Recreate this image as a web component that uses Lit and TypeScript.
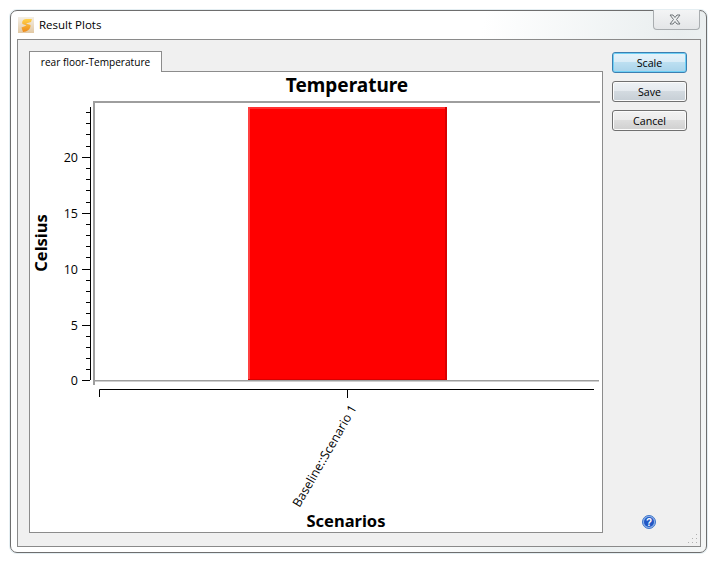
import { LitElement, html, css, svg } from "lit";
import { customElement } from "lit/decorators.js";

const Y0 = 380.4;
const UNIT = 11.18;

@customElement("app-root")
export class AppRoot extends LitElement {
  static styles = css`
    :host { display: block; width: 717px; height: 563px; background: #fff; font-family: "Open Sans", "Noto Sans", sans-serif; color: #000; overflow: hidden; }
    .page { box-sizing: border-box; width: 717px; height: 563px; padding: 10px; }
    .window { box-sizing: border-box; position: relative; width: 697px; height: 543px; border: 1px solid #6e6e6e; border-radius: 7px; box-shadow: 0 0 0 1px #e4eef2; background: linear-gradient(100deg, #ffffff 0%, #ffffff 60%, #e9eeef 85%, #f4f6f6 100%); display: flex; flex-direction: column; padding: 0 5px 5px 6px; }
    .title { height: 28px; flex: none; display: flex; align-items: center; gap: 5px; font-size: 11.5px; padding: 0 0 2px 1px; box-sizing: border-box; }
    .title svg { display: block; margin-top: 2px; }
    .close { position: absolute; right: 6px; top: -1px; width: 47px; height: 20px; box-sizing: border-box; border: 1px solid #a9adb0; border-top: none; border-radius: 0 0 4px 4px; background: linear-gradient(#f3f4f5, #e4e6e8); display: flex; align-items: center; justify-content: center; padding-right: 4px; }
    .client { flex: 1; box-sizing: border-box; border: 1px solid #8a8a8a; background: #f0f0f0; display: flex; padding: 11px 12px 13px 11px; gap: 9px; position: relative; }
    .tabs { width: 574px; display: flex; flex-direction: column; }
    .tab { align-self: flex-start; box-sizing: border-box; height: 21px; width: 133px; border: 1px solid #8c8c8c; border-bottom: none; background: #fff; font-size: 10.1px; display: flex; align-items: center; justify-content: center; margin-bottom: -1px; position: relative; z-index: 1; }
    .pane { flex: 1; box-sizing: border-box; border: 1px solid #8c8c8c; background: #fff; }
    .pane svg { display: block; }
    .side { width: 75px; display: flex; flex-direction: column; gap: 8px; margin-top: 1px; }
    .btn { box-sizing: border-box; height: 21px; border: 1px solid #707070; border-radius: 3px; background: linear-gradient(#f2f2f2 0%, #ebebeb 48%, #dddddd 50%, #cfcfcf 100%); font-size: 10.7px; display: flex; align-items: center; justify-content: center; box-shadow: inset 0 0 0 1px #fbfbfb; }
    .btn.save { background: linear-gradient(#eef2f5 0%, #e4e9ee 48%, #d3dae0 50%, #c6ced5 100%); }
    .btn.scale { border-color: #3c7fb1; background: linear-gradient(#e6f3fa 0%, #d9ecf7 48%, #bcdff1 50%, #a9d3ea 100%); box-shadow: inset 0 0 0 1px #6fd0f5; }
    .help { position: absolute; left: 624px; top: 475px; }
    .grip { position: absolute; right: 1px; bottom: 1px; }
    .axis-label { font-family: "Noto Sans", sans-serif; font-weight: 700; }
    .tick-label { font-family: "Open Sans", sans-serif; font-size: 12.5px; }
    .slanted { font-size: 12.4px; }
  `;

  private yAxis() {
    const ticks = [];
    for (let i = 0; i <= 24; i++) {
      const y = Math.round(Y0 - i * UNIT) + 0.5;
      const major = i % 5 === 0;
      ticks.push(svg`<line x1=${major ? 82 : 86} x2="90" y1=${y} y2=${y} stroke="#000"/>`);
      if (major) ticks.push(svg`<text class="tick-label" x="78" y=${y + 4.5} text-anchor="end">${i}</text>`);
    }
    return ticks;
  }

  render() {
    return html`
      <div class="page">
        <div class="window">
          <div class="title">
            <svg width="16" height="16" viewBox="0 0 16 16">
              <defs>
                <linearGradient id="bgI" x1="0" y1="0" x2="0" y2="1"><stop offset="0" stop-color="#f4efe6"/><stop offset="1" stop-color="#e2c9a4"/></linearGradient>
                <linearGradient id="sI" x1="0" y1="0" x2="0" y2="1"><stop offset="0" stop-color="#ffd24a"/><stop offset="1" stop-color="#ee8a1a"/></linearGradient>
              </defs>
              <rect width="16" height="16" fill="url(#bgI)"/>
              <path d="M14 2 H8 C5 2 3.5 5 4.5 7 L8.5 8.5 L3.5 10.5 L5 15 C9 15 13 12 12.5 8 L8 6.5 L13 5 Z" fill="url(#sI)"/>
            </svg>
            <span>Result Plots</span>
          </div>
          <div class="close">
            <svg width="14" height="11" viewBox="0 0 14 11">
              <path d="M2 1 H5 L7 3.5 L9 1 H12 L8.5 5.5 L12 10 H9 L7 7.5 L5 10 H2 L5.5 5.5 Z" fill="#eef0f1" stroke="#6f7478"/>
            </svg>
          </div>
          <div class="client">
            <div class="tabs">
              <div class="tab">rear floor-Temperature</div>
              <div class="pane">
                <svg width="572" height="459" viewBox="30 72 572 459">
                  <text class="axis-label" x="347" y="92" text-anchor="middle" font-size="19">Temperature</text>
                  <rect x="93" y="101" width="507" height="2" fill="#9e9e9e"/>
                  <rect x="93" y="101" width="2" height="284" fill="#9e9e9e"/>
                  <rect x="93" y="380" width="506" height="1.5" fill="#9e9e9e"/>
                  <line x1="90.5" x2="90.5" y1="107" y2="380" stroke="#000"/>
                  ${this.yAxis()}
                  <rect x="248" y="107" width="199" height="273" fill="#ff0000"/>
                  <rect x="248" y="107" width="199" height="2" fill="#ff3030"/>
                  <rect x="248" y="107" width="2" height="273" fill="#ff4040"/>
                  <rect x="445" y="107" width="2" height="273" fill="#d80000"/>
                  <rect x="248" y="379" width="199" height="1" fill="#d80000"/>
                  <text class="axis-label" transform="translate(47 243) rotate(-90)" text-anchor="middle" font-size="16.5">Celsius</text>
                  <path d="M99.5 397 V389.5 H594 M347.5 389.5 V398" fill="none" stroke="#000"/>
                  <text class="tick-label slanted" transform="translate(299.5 508) rotate(-60)">Baseline::Scenario 1</text>
                  <text class="axis-label" x="346" y="527" text-anchor="middle" font-size="16.5">Scenarios</text>
                </svg>
              </div>
            </div>
            <div class="side">
              <div class="btn scale">Scale</div>
              <div class="btn save">Save</div>
              <div class="btn">Cancel</div>
            </div>
            <svg class="help" width="14" height="14" viewBox="0 0 14 14">
              <circle cx="7" cy="7" r="6.5" fill="#8fb4ea" stroke="#3e74c8"/>
              <circle cx="7" cy="7" r="5" fill="#2257c4"/>
              <text x="7" y="10.5" font-size="10" font-weight="700" text-anchor="middle" fill="#fff" font-family="Liberation Sans">?</text>
            </svg>
            <svg class="grip" width="11" height="11" viewBox="0 0 11 11" fill="#b0b0b0">
              <rect x="8" y="0" width="1" height="1"/><rect x="8" y="4" width="1" height="1"/><rect x="8" y="8" width="1" height="1"/>
              <rect x="4" y="4" width="1" height="1"/><rect x="4" y="8" width="1" height="1"/><rect x="0" y="8" width="1" height="1"/>
            </svg>
          </div>
        </div>
      </div>
    `;
  }
}
